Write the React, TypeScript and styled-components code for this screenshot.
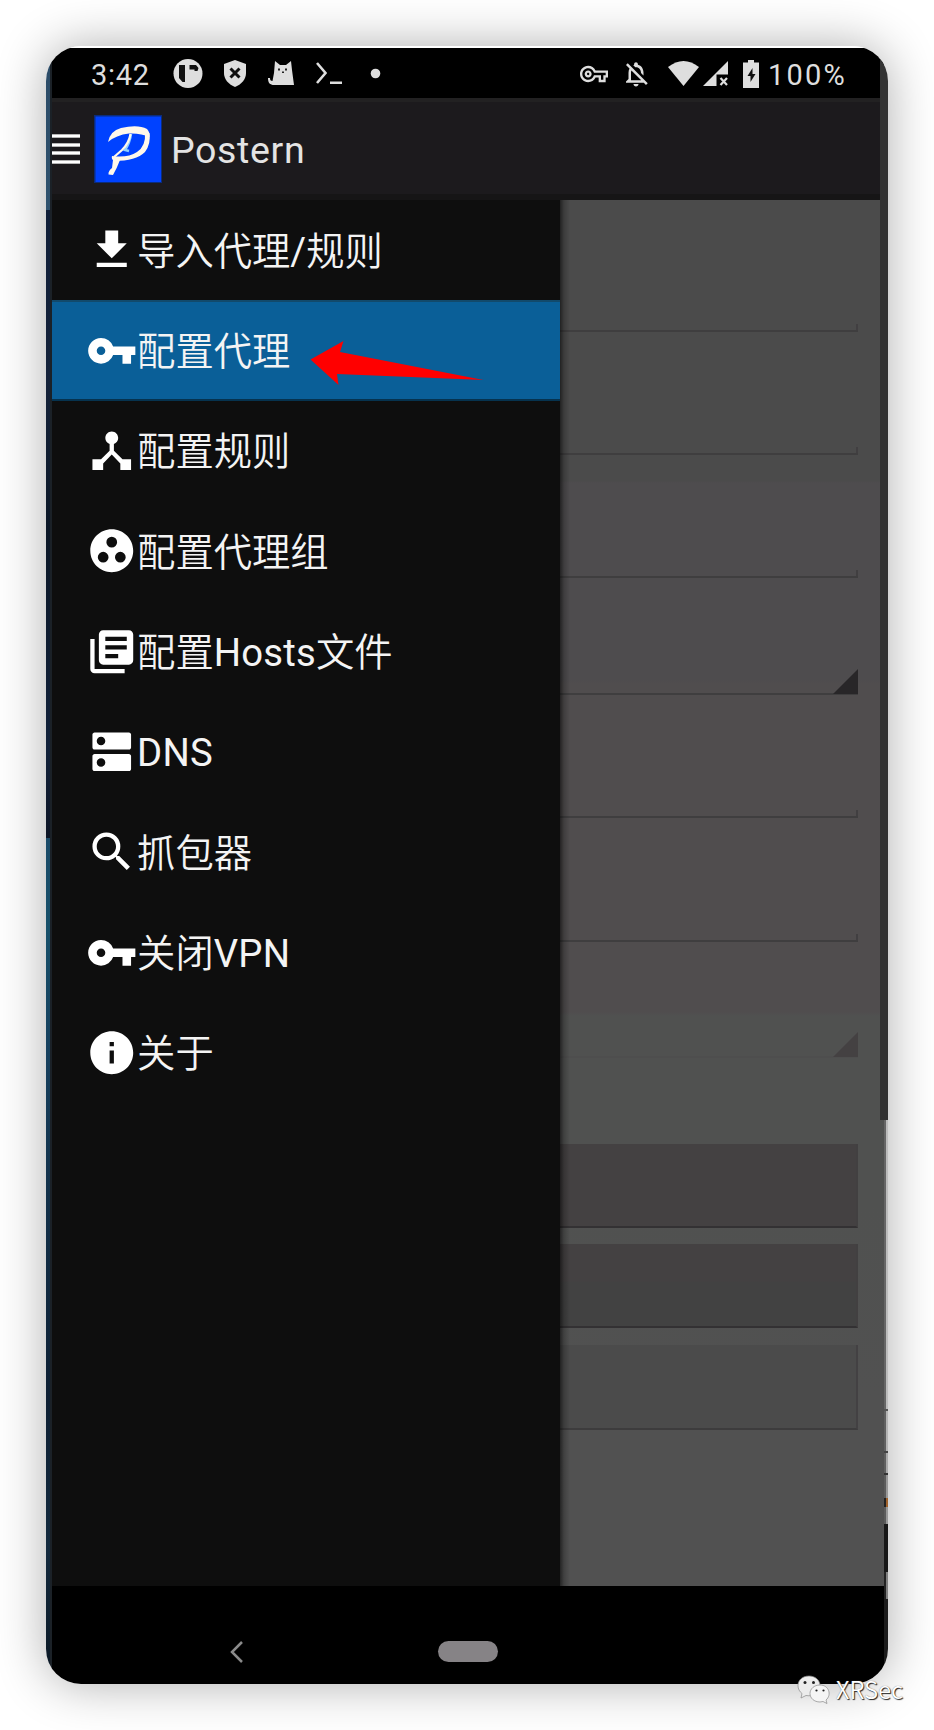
import React from 'react';
import styled, { createGlobalStyle } from 'styled-components';
import {
  MdDeviceHub,
  MdDns,
  MdFileDownload,
  MdGroupWork,
  MdInfo,
  MdLibraryBooks,
  MdOutlineNotificationsOff,
  MdOutlineVpnKey,
  MdSearch,
  MdVpnKey,
} from 'react-icons/md';

const GlobalStyle = createGlobalStyle`
  * { box-sizing: border-box; }
  body {
    margin: 0;
    background: #fff;
    font-family: Roboto, "Noto Sans CJK SC", sans-serif;
  }
`;

const Page = styled.main`
  position: relative;
  width: 934px;
  height: 1730px;
  padding: 46px;
  overflow: hidden;
`;

const Halo = styled.div`
  width: 842px;
  height: 1638px;
  border-radius: 35px;
  box-shadow: 0 0 50px rgba(0, 0, 0, 0.32);
`;

const Phone = styled.div`
  display: flex;
  width: 842px;
  height: 1638px;
  padding-top: 2px;
  border-radius: 35px;
  overflow: hidden;
  background: #fff;
`;

const LeftEdge = styled.div`
  width: 6px;
  border-right: 2px solid #1b2127;
  background: linear-gradient(
    #2b4a66 0,
    #2f526e 162px,
    #0f1e38 162px,
    #14223a 330px,
    #0a1626 480px,
    #11213a 700px,
    #0c1424 790px,
    #1a4a68 790px,
    #17506a 880px,
    #16405e 1000px,
    #123049 1150px,
    #0d1f33 1350px,
    #132a3e 1500px,
    #0a1622 1636px
  );
`;

const RightEdge = styled.div`
  position: relative;
  z-index: 1;
  display: flex;
  flex-direction: column;
  width: 8px;
  margin-left: -4px;
`;

const EdgePart = styled.div<{ $h: number; $bg: string; $inset?: number }>`
  height: ${(p) => p.$h}px;
  margin-left: ${(p) => p.$inset ?? 4}px;
  background: ${(p) => p.$bg};
`;

const Screen = styled.div`
  display: flex;
  flex-direction: column;
  width: 832px;
`;

const StatusBar = styled.header`
  display: flex;
  align-items: center;
  height: 50px;
  padding: 2px 37px 0 39px;
  background: #000;
  color: #dedede;
  font-size: 29px;
  svg { display: block; flex: none; }
`;

const Clock = styled.span`
  width: 82px;
  padding-top: 1px;
  letter-spacing: 0.7px;
`;

const Battery = styled.span`
  padding-top: 1px;
  letter-spacing: 2.2px;
`;

const Gap = styled.span<{ $w?: number }>`
  ${(p) => (p.$w ? `width: ${p.$w}px;` : 'flex: 1;')}
`;

const AppBar = styled.header`
  display: flex;
  align-items: center;
  height: 102px;
  padding-top: 2px;
  border-top: 4px solid #222122;
  border-bottom: 6px solid #161516;
  background: #1c1a1d;
`;

const Burger = styled.div`
  display: grid;
  gap: 4.6px;
  width: 28px;
  margin-right: 14px;
`;

const Line = styled.i`
  height: 4px;
  background: linear-gradient(#b5b5b5 0 1px, #fff 1px 3px, #b5b5b5 3px);
`;

const Title = styled.h1`
  margin: 0 0 0 9px;
  padding-top: 2px;
  color: #e4e4e4;
  font-size: 37.5px;
  font-weight: 400;
  letter-spacing: 0.65px;
`;

const Main = styled.div`
  display: flex;
  height: 1386px;
`;

const Drawer = styled.nav`
  width: 508px;
  background: #0e0e0e;
`;

const Item = styled.div<{ $active?: boolean }>`
  display: flex;
  align-items: center;
  height: 100.35px;
  padding-left: 33.6px;
  background: ${(p) => (p.$active ? '#0a5f98' : 'transparent')};
  box-shadow: ${(p) => (p.$active ? 'inset 0 2px #124a6c, inset 0 -2px #06334f' : 'none')};
  svg { flex: none; color: #fff; }
`;

const Label = styled.span`
  padding-top: 3px;
  color: #f4f4f4;
  font-size: 38.3px;
  font-weight: 350;
  line-height: 50px;
`;

const Latin = styled.span`
  font-weight: 400;
  letter-spacing: 0.2px;
`;

const Form = styled.div`
  position: relative;
  display: flex;
  flex-direction: column;
  width: 324px;
  padding-right: 26px;
  background: linear-gradient(
    #4b4b4b 0 281px,
    #4e4c4e 283px 480px,
    #504d4e 484px 812px,
    #505150 816px 1000px,
    #515151 1200px
  );

  &::after {
    content: '';
    position: absolute;
    inset: 0 auto 0 0;
    width: 10px;
    background: linear-gradient(90deg, rgba(0, 0, 0, 0.55), rgba(0, 0, 0, 0.2) 4px, transparent);
  }
`;

const Field = styled.div<{ $h: number; $faint?: boolean }>`
  display: flex;
  align-items: flex-end;
  justify-content: flex-end;
  height: ${(p) => p.$h}px;
  border-bottom: 2px solid ${(p) => (p.$faint ? '#4e4e4e' : '#3f3e3f')};
`;

const Tick = styled.i`
  width: 2px;
  height: 6px;
  background: #413f41;
`;

const Corner = styled.i<{ $c: string }>`
  width: 25px;
  height: 25px;
  margin-bottom: -1px;
  background: ${(p) => p.$c};
  clip-path: polygon(100% 0, 100% 100%, 0 100%);
`;

const Block = styled.div<{ $mt: number; $bg: string; $outlined?: boolean }>`
  height: ${(p) => (p.$outlined ? 85 : 84)}px;
  margin-top: ${(p) => p.$mt}px;
  background: ${(p) => p.$bg};
  border-bottom: 2px solid ${(p) => (p.$outlined ? '#3d3c3d' : '#333133')};
  border-right: 2px solid ${(p) => (p.$outlined ? '#434143' : '#424041')};
`;

const NavBar = styled.footer`
  display: grid;
  grid-template-columns: 1fr 60px 1fr;
  align-items: center;
  height: 98px;
  padding: 33px 0 0;
  background: #000;
`;

const Back = styled.svg`
  margin-left: 176.5px;
`;

const Home = styled.div`
  height: 21px;
  border-radius: 11px;
  background: #868386;
`;

const Arrow = styled.svg`
  position: absolute;
  left: 306px;
  top: 336px;
`;

const Watermark = styled.div`
  position: absolute;
  left: 796px;
  top: 1673px;
  display: flex;
  align-items: center;
  gap: 6px;
  color: #fff;
  font-family: "Noto Sans CJK SC", sans-serif;
  font-size: 23.8px;
  line-height: 32px;
  font-weight: 350;
  text-shadow: 1px 1px 1px #222, 0 0 1px #777;
`;

const HaloLayer = styled.div`
  position: absolute;
  inset: 46px auto auto 46px;
  z-index: -1;
`;

const items = [
  { label: '导入代理/规则', icon: MdFileDownload },
  { label: '配置代理', icon: MdVpnKey, active: true },
  { label: '配置规则', icon: MdDeviceHub },
  { label: '配置代理组', icon: MdGroupWork },
  { label: '配置Hosts文件', icon: MdLibraryBooks },
  { label: 'DNS', icon: MdDns },
  { label: '抓包器', icon: MdSearch },
  { label: '关闭VPN', icon: MdVpnKey },
  { label: '关于', icon: MdInfo },
];

// Latin runs are set a step heavier than the Chinese glyphs around them.
function mixedText(label: string) {
  return label
    .split(/([A-Za-z/]+)/)
    .filter(Boolean)
    .map((part) => (/^[A-Za-z/]/.test(part) ? <Latin key={part}>{part}</Latin> : part));
}

function NotificationIcons() {
  return (
    <svg width="210" height="36" viewBox="0 0 210 36" fill="#dedede">
      <circle cx="15" cy="17.5" r="14.5" />
      <path d="M6 9h6v17H9.500L6 22zM16.500 9h6.500l2.500 3-1 3h-3v-1.500h-5z" fill="#111" />
      <path d="M62 4l11 4v9c0 6-4 11-11 14-7-3-11-8-11-14V8z" />
      <path d="M57.500 12.500l9 9M66.500 12.500l-9 9" stroke="#111" strokeWidth="3" />
      <path d="M102 5l5 4h6l5-4 1 9 2 15h-20c-4 0-6-2-6-7h2c0 2 .5 3 2.500 3l1.500-8z" />
      <path d="M105 12.500h2v2h-2zM112 12.500h2v2h-2zM109 15.500h2v1.500h-2z" fill="#222" />
      <path d="M144 7l8.500 10-8.500 10" fill="none" stroke="#dedede" strokeWidth="2.600" />
      <path d="M157 25.500h12v2.500h-12z" />
      <circle cx="202.500" cy="17.500" r="4.800" />
    </svg>
  );
}

function SignalIcons() {
  return (
    <svg width="96" height="32" viewBox="0 0 96 32" fill="#dedede">
      <path d="M1 9Q16.500-3 32 9L16.500 28z" />
      <path d="M61 3v13.500H49.500V28H36z" />
      <path d="M53.500 20l6.500 7M60 20l-6.500 7" stroke="#dedede" strokeWidth="2.200" />
      <path d="M81 2h6v2.500h5V30H76V4.500h5z" />
      <path d="M85.500 10l-5 8h3v6l5-8h-3z" fill="#111" />
    </svg>
  );
}

function Logo() {
  return (
    <svg width="68" height="68" viewBox="0 0 68 68">
      <rect width="68" height="68" fill="#0b2c7c" />
      <rect x="1.500" y="1.500" width="65.500" height="65.500" fill="#0042ff" />
      <path d="M37 19Q36 27 31 35L35 36" fill="none" stroke="#8fd0ff" strokeWidth="2.500" />
      <g fill="#fff8ea">
        <path d="M14 27Q16 16 27 13Q44 9 53 14Q56 17 55.500 22Q47 18 35 18.500Q22 20 14 27z" />
        <path d="M51 18L55.500 18Q57 29 51 37Q42 46 20 46Q17 44 18 41Q34 43 43 37Q52 31 51 18z" />
        <path d="M19 45h7Q23 53 19 60L14.500 59.500Q14 56 18 53z" />
      </g>
      <path d="M36.500 19Q35 28 28 35L20 42" fill="none" stroke="#fff8ea" strokeWidth="2.200" />
    </svg>
  );
}

function ChatLogo() {
  return (
    <svg width="34" height="30" viewBox="0 0 34 30" stroke="#888" strokeWidth="0.700">
      <path d="M13 2C6 2 2 6.500 2 11.500c0 3.500 1.500 6 4 8L5 24l5-2.500c8 1.500 14-3 14-10C24 6 19 2 13 2z" fill="#ececec" />
      <path d="M24 11c-6 0-10 4-10 8.500S18 28 24 28l3-.5 4 2-1-3.500c6-5 3-15-6-15z" fill="#f5f5f5" />
      <g fill="#222" stroke="none">
        <circle cx="9" cy="8.500" r="1.500" />
        <circle cx="17.500" cy="8.500" r="1.500" />
        <circle cx="20.500" cy="16.500" r="1.100" />
        <circle cx="27.500" cy="16.500" r="1.100" />
      </g>
    </svg>
  );
}

export default function App() {
  return (
    <Page>
      <GlobalStyle />
      <HaloLayer>
        <Halo />
      </HaloLayer>
      <Phone>
        <LeftEdge />
        <Screen>
          <StatusBar>
            <Clock>3:42</Clock>
            <NotificationIcons />
            <Gap />
            <MdOutlineVpnKey size={28} />
            <Gap $w={12.5} />
            <MdOutlineNotificationsOff size={30} />
            <Gap $w={16.5} />
            <SignalIcons />
            <Gap $w={5} />
            <Battery>100%</Battery>
          </StatusBar>
          <AppBar>
            <Burger>
              <Line />
              <Line />
              <Line />
              <Line />
            </Burger>
            <Logo />
            <Title>Postern</Title>
          </AppBar>
          <Main>
            <Drawer>
              {items.map(({ label, icon: Icon, active }) => (
                <Item key={label} $active={active}>
                  <Icon size={51.5} />
                  <Label>{mixedText(label)}</Label>
                </Item>
              ))}
            </Drawer>
            <Form>
              <Field $h={132}><Tick /></Field>
              <Field $h={123}><Tick /></Field>
              <Field $h={123}><Tick /></Field>
              <Field $h={117}><Corner $c="#282628" /></Field>
              <Field $h={123}><Tick /></Field>
              <Field $h={124}><Tick /></Field>
              <Field $h={116} $faint><Corner $c="#444142" /></Field>
              <Block $mt={86} $bg="#444142" />
              <Block $mt={16} $bg="linear-gradient(#444142 37px, #424242 38px)" />
              <Block $mt={17} $bg="#4b4b4b" $outlined />
            </Form>
          </Main>
          <NavBar>
            <Back width="16" height="24" viewBox="0 0 16 24" fill="none" stroke="#8a8a8a" strokeWidth="2.500">
              <path d="M13 2L3 12l10 10" />
            </Back>
            <Home />
          </NavBar>
        </Screen>
        <RightEdge>
          <EdgePart $h={1072} $bg="#333" $inset={0} />
          <EdgePart $h={289} $bg="linear-gradient(90deg, #666 2px, #bcbcbc 2px)" />
          <EdgePart $h={2} $bg="#555" />
          <EdgePart $h={40} $bg="linear-gradient(90deg, #606060 2px, #b4b4b4 2px)" />
          <EdgePart $h={2} $bg="#444" />
          <EdgePart $h={20} $bg="linear-gradient(90deg, #606060 2px, #aaa 2px)" />
          <EdgePart $h={2} $bg="#333" />
          <EdgePart $h={23} $bg="linear-gradient(90deg, #5c5c5c 2px, #999 2px)" />
          <EdgePart $h={9} $bg="linear-gradient(90deg, #222 2px, #a0622c 2px)" />
          <EdgePart $h={17} $bg="linear-gradient(90deg, #5c5c5c 2px, #999 2px)" />
          <EdgePart $h={48} $bg="#181818" />
          <EdgePart $h={27} $bg="linear-gradient(90deg, #222 2px, #808080 2px)" />
          <EdgePart $h={85} $bg="#1c1c1c" />
        </RightEdge>
      </Phone>
      <Arrow width="180" height="54" viewBox="0 0 180 54" fill="#f00">
        <path d="M4.500 23.500L37.500 5 34 16 177.500 44 31 38l1.500 11z" />
      </Arrow>
      <Watermark>
        <ChatLogo />
        XRSec
      </Watermark>
    </Page>
  );
}
